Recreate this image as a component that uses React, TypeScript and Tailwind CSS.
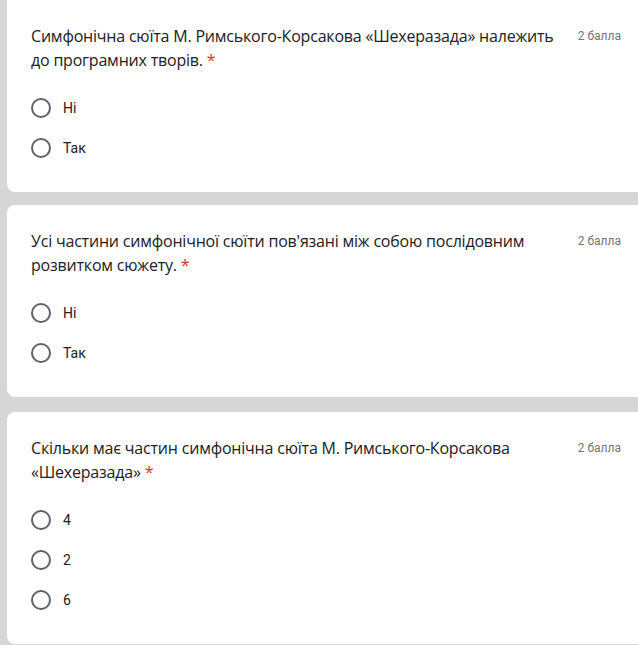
const QUESTIONS: { lines: string[]; options: string[]; gap: string; first?: boolean }[] = [
  {
    lines: ['Симфонічна сюїта М. Римського-Корсакова «Шехеразада» належить', 'до програмних творів.'],
    options: ['Ні', 'Так'],
    gap: 'mb-[13px]',
    first: true,
  },
  {
    lines: ["Усі частини симфонічної сюїти пов'язані між собою послідовним", 'розвитком сюжету.'],
    options: ['Ні', 'Так'],
    gap: 'mb-[15px]',
  },
  {
    lines: ['Скільки має частин симфонічна сюїта М. Римського-Корсакова', '«Шехеразада»'],
    options: ['4', '2', '6'],
    gap: '',
  },
];

function Radio() {
  return <span className="w-5 h-5 shrink-0 rounded-full border-2 border-[#5f6368] box-border" />;
}

export default function App() {
  return (
    <div className="w-[638px] h-[645px] overflow-hidden bg-[#d6d6d6] pl-[7px] flex flex-col">
      {QUESTIONS.map((q, i) => (
        <div
          key={i}
          className={`w-[660px] shrink-0 bg-white pt-6 pb-6 pl-6 pr-[46px] ${q.gap} ${q.first ? 'rounded-b-lg' : 'rounded-lg'}`}
        >
          <div className="flex items-start justify-between">
            <div className="text-[16px] leading-6 text-[#202124] tracking-[-0.2px]" style={{ fontFamily: '"Open Sans", sans-serif' }}>
              {q.lines[0]}
              <br />
              {q.lines[1]} <span className="text-[#d93025]">*</span>
            </div>
            <div className="text-[12px] leading-6 text-[#70757a] whitespace-nowrap" style={{ fontFamily: 'Roboto, sans-serif' }}>
              2 балла
            </div>
          </div>
          <div className="mt-4 flex flex-col">
            {q.options.map(o => (
              <div key={o} className="h-10 flex items-center gap-3">
                <Radio />
                <span className="text-[14px] text-[#202124]" style={{ fontFamily: 'Roboto, sans-serif' }}>{o}</span>
              </div>
            ))}
          </div>
        </div>
      ))}
    </div>
  );
}
